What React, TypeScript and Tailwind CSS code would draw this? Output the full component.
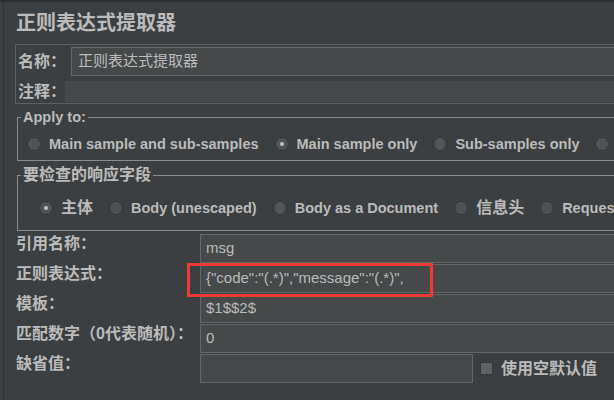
import React from "react";

function Radio({ checked = false }: { checked?: boolean }) {
  return (
    <span className="w-[14px] h-[14px] shrink-0 rounded-full bg-[#505356] border border-[#313335] flex items-center justify-center">
      {checked && <span className="w-[4px] h-[4px] rounded-full bg-[#c4c4c4]" />}
    </span>
  );
}

function RadioItem({ label, checked = false, cjk = false }: { label: string; checked?: boolean; cjk?: boolean }) {
  return (
    <div className="flex items-center gap-[8px] shrink-0">
      <Radio checked={checked} />
      <span className={cjk ? "text-[16px] font-bold leading-[18px] whitespace-nowrap" : "text-[14.5px] font-bold leading-[18px] whitespace-nowrap"}>
        {label}
      </span>
    </div>
  );
}

function Row({ label, value, children }: { label: string; value?: string; children?: React.ReactNode }) {
  return (
    <div className="flex h-[29px] mt-[1px] first:mt-0">
      <div className="w-[196px] shrink-0 pl-[12px] flex items-center pb-[9px] text-[16px] font-bold whitespace-nowrap">{label}</div>
      {children ?? (
        <div className="flex-1 h-full bg-[#45494a] border border-[#646668] pl-[5px] flex items-center text-[15px] font-normal text-[#bbbbbb] whitespace-nowrap">
          {value}
        </div>
      )}
    </div>
  );
}

export default function App() {
  return (
    <div
      className="relative w-[614px] h-[400px] overflow-hidden bg-[#3c3f41] border-t-2 border-[#2b2d2e] pl-[3px] text-[#bbbbbb]"
      style={{ fontFamily: '"Liberation Sans", "Noto Sans CJK SC", sans-serif' }}
    >
      <div className="h-full w-[640px] border-l border-[#2e3032]">
        <div className="h-[42px] flex items-center pl-[12px] text-[20px] font-bold leading-none">正则表达式提取器</div>

        <div className="ml-[11px] w-[620px] border border-[#5e6062] pt-[2px] pb-[1px]">
          <div className="flex items-center h-[29px]">
            <div className="w-[55px] shrink-0 pl-[2px] text-[16px] font-bold whitespace-nowrap">名称：</div>
            <div className="flex-1 h-full bg-[#45494a] border border-[#646668] pl-[6px] flex items-center text-[15px]">
              正则表达式提取器
            </div>
          </div>
          <div className="flex items-center h-[21px] mt-[5px]">
            <div className="w-[49px] shrink-0 pl-[2px] text-[16px] font-bold whitespace-nowrap overflow-visible">注释：</div>
            <div className="flex-1 h-full bg-[#45494a]" />
          </div>
        </div>

        <fieldset className="ml-[13px] mt-[5px] w-[620px] border border-[#8a8c8e]">
          <legend className="ml-[3px] px-[2px] text-[14.5px] font-bold leading-[16px]">Apply to:</legend>
          <div className="h-[35px] pt-[3px] pl-[9px] flex items-center gap-[16px]">
            <RadioItem label="Main sample and sub-samples" />
            <RadioItem label="Main sample only" checked />
            <RadioItem label="Sub-samples only" />
            <RadioItem label="JMeter Variable Name to use" />
          </div>
        </fieldset>

        <fieldset className="ml-[13px] mt-[5px] w-[620px] border border-[#8a8c8e]">
          <legend className="ml-[3px] px-[2px] text-[16px] font-bold leading-[18px]">要检查的响应字段</legend>
          <div className="h-[46px] pt-[2px] pl-[21px] flex items-center gap-[16px]">
            <RadioItem label="主体" checked cjk />
            <RadioItem label="Body (unescaped)" />
            <RadioItem label="Body as a Document" />
            <RadioItem label="信息头" cjk />
            <RadioItem label="Request Headers" />
          </div>
        </fieldset>

        <div className="mt-[3px] flex flex-col">
          <Row label="引用名称：" value="msg" />
          <Row label="正则表达式：" value={'{"code":"(.*)","message":"(.*)",'} />
          <Row label="模板：" value="$1$$2$" />
          <Row label="匹配数字（0代表随机）：" value="0" />
          <Row label="缺省值：">
            <div className="flex items-center h-full">
              <div className="w-[273px] h-full bg-[#45494a] border border-[#646668]" />
              <span className="ml-[7px] w-[13px] h-[13px] bg-[#5f6264] border border-[#35373a]" />
              <span className="ml-[8px] text-[16px] font-bold whitespace-nowrap">使用空默认值</span>
            </div>
          </Row>
        </div>
      </div>

      <div className="absolute left-[187px] top-[261px] w-[246px] h-[34px] border-[3px] border-[#ec3a36]" />
    </div>
  );
}
